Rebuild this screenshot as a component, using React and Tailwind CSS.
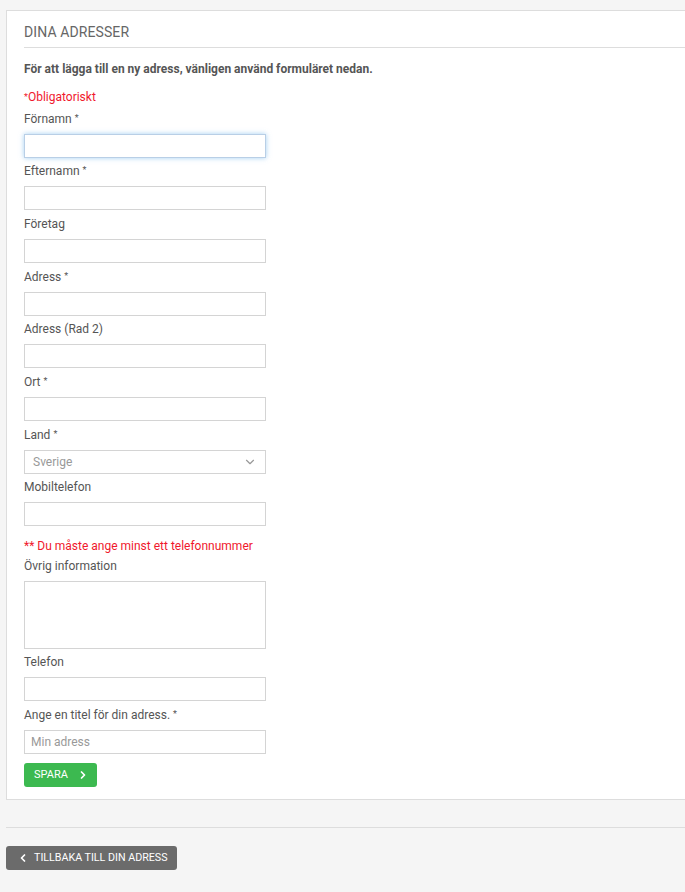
import { ChevronDown, ChevronRight, ChevronLeft } from "lucide-react";

const Req = () => <sup className="text-[9px] ml-[3px] relative -top-[2px]">*</sup>;

function Label({ children, req }) {
  return (
    <div className="h-[18px] leading-[18px] mb-[6px] text-[12px] text-[#555]">
      {children}
      {req && <Req />}
    </div>
  );
}

function Input({ focus, placeholder }) {
  return (
    <input
      type="text"
      placeholder={placeholder}
      className={
        "block w-[242px] h-[24px] mb-[4.7px] border bg-white px-[6px] text-[12px] text-[#555] placeholder:text-[#999] outline-none " +
        (focus
          ? "border-[#b9cfe6] shadow-[0_0_5px_rgba(102,175,233,0.6)]"
          : "border-[#d4d4d4]")
      }
    />
  );
}

export default function App() {
  return (
    <div
      className="bg-[#f5f5f5] min-h-screen pt-[10px] pb-[22px]"
      style={{ fontFamily: "Roboto, 'Liberation Sans', sans-serif" }}
    >
      {/* Panel */}
      <div className="ml-[6px] bg-white border-l border-t border-b border-[#dddddd] pl-[17px] pt-[11px] pb-[12px]">
        <h1 className="text-[14px] leading-[20px] text-[#666] pb-[5px] border-b border-[#dddddd] tracking-[0.1px]">
          DINA ADRESSER
        </h1>

        <p className="mt-[12px] text-[12px] leading-[18px] font-bold text-[#555]">
          För att lägga till en ny adress, vänligen använd formuläret nedan.
        </p>

        <div className="mt-[10px] mb-[3.5px] h-[18px] leading-[18px] text-[12px] text-[#f0182d]">
          <sup className="text-[9px] relative -top-[1px]">*</sup>Obligatoriskt
        </div>

        <Label req>Förnamn</Label>
        <Input focus />
        <Label req>Efternamn</Label>
        <Input />
        <Label>Företag</Label>
        <Input />
        <Label req>Adress</Label>
        <Input />
        <Label>Adress (Rad 2)</Label>
        <Input />
        <Label req>Ort</Label>
        <Input />
        <Label req>Land</Label>
        <div className="w-[242px] h-[24px] mb-[4.7px] border border-[#d4d4d4] flex items-center justify-between pl-[8px] pr-[8px] text-[12px] text-[#999]">
          <span>Sverige</span>
          <ChevronDown size={14} strokeWidth={2} className="text-[#999]" />
        </div>
        <Label>Mobiltelefon</Label>
        <Input />

        <div className="mt-[11px] mb-[2px] h-[18px] leading-[18px] text-[12px] text-[#f0182d]">
          ** Du måste ange minst ett telefonnummer
        </div>

        <Label>Övrig information</Label>
        <textarea className="block w-[242px] h-[68px] mb-[4px] border border-[#d4d4d4] resize-none outline-none" />
        <Label>Telefon</Label>
        <Input />
        <Label req>Ange en titel för din adress.</Label>
        <Input placeholder="Min adress" />

        <button className="mt-[9px] flex items-center h-[24px] w-[73px] pl-[10px] rounded-[3px] bg-[#3cb950] text-white text-[11px]">
          SPARA
          <ChevronRight size={12} strokeWidth={3.5} className="ml-[9px]" />
        </button>
      </div>

      {/* Footer */}
      <div className="ml-[6px] mt-[27px] border-t border-[#dddddd]" />
      <button className="ml-[6px] mt-[18px] flex items-center h-[24px] w-[171px] pl-[11px] rounded-[3px] bg-[#6b6b6b] text-white text-[10.7px]">
        <ChevronLeft size={12} strokeWidth={3.5} className="mr-[5px]" />
        TILLBAKA TILL DIN ADRESS
      </button>
    </div>
  );
}
